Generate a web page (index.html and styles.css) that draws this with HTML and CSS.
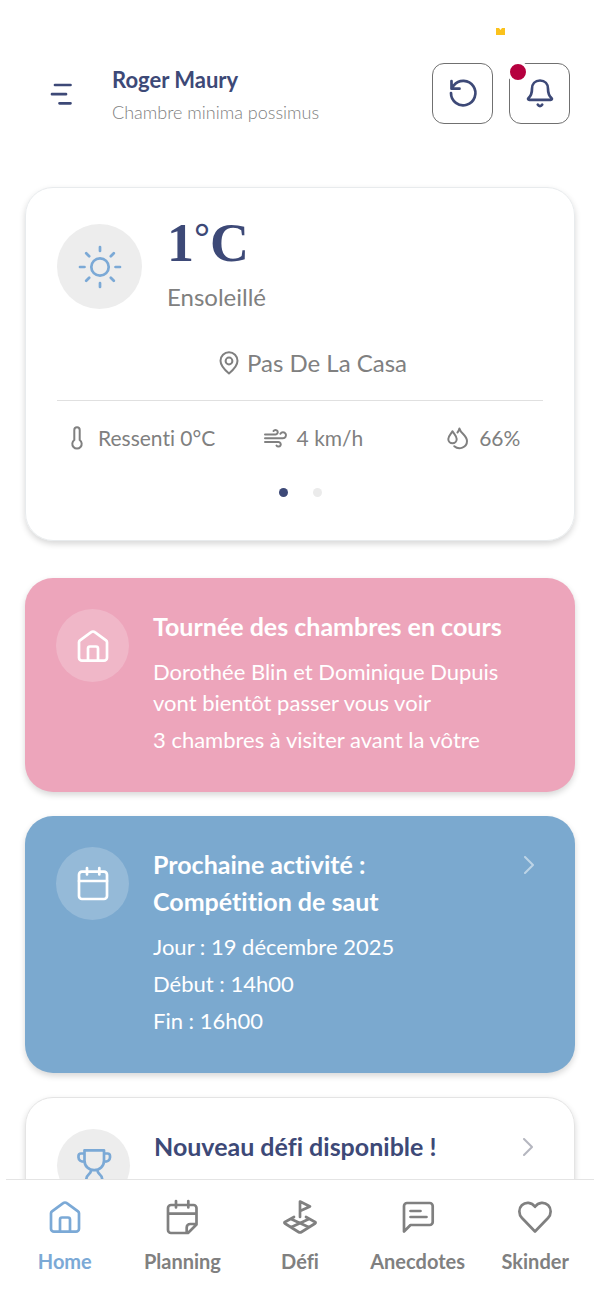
FILE: index.html
```html
<!DOCTYPE html>
<html lang="fr">
<head>
<meta charset="utf-8">
<meta name="viewport" content="width=device-width, initial-scale=1.0">
<title>Home</title>
<link rel="stylesheet" href="styles.css">
</head>
<body>

<!-- shared shapes -->
<svg class="defs" aria-hidden="true">
	<symbol id="house" viewBox="0 0 36 36"><path d="M18 3.500c.7 0 1.300.2 1.800.6L31 12.300c.7.5 1 1.200 1 2V29.700a3 3 0 0 1-3 3H7a3 3 0 0 1-3-3V14.300c0-.8.300-1.500 1-2L16.200 4.100c.5-.4 1.100-.6 1.800-.6zM13 32.700V20.500a2 2 0 0 1 2-2h6a2 2 0 0 1 2 2v12.200"/></symbol>
	<symbol id="chevron" viewBox="0 0 24 24"><path d="M8 4l8 8-8 8"/></symbol>
</svg>

<main>
	<header>
		<svg class="crown" viewBox="0 0 9 7"><path d="M0 0h3l1.500 2L6 0h3v7H0z"/></svg>
		<button class="menu" aria-label="Menu"><svg class="icon" viewBox="0 0 36 36"><path d="M15 9H30.500M12 18.200H26M19.500 27.300H30.500"/></svg></button>
		<div class="who">
			<h1>Roger Maury</h1>
			<p>Chambre minima possimus</p>
		</div>
		<button class="square" aria-label="Actualiser"><svg class="icon" viewBox="0 0 36 36"><path d="M6.500 6v7.700h8M6 18a12.200 12.200 0 1 0 2.800-7.700l-2 3"/></svg></button>
		<button class="square" aria-label="Notifications"><svg class="icon" viewBox="0 0 36 36"><path d="M18 5.500c-5 0-8 3.600-8 8.200 0 4.800-1 7-3.400 9.200-1 .9-.5 2 .8 2h21.200c1.300 0 1.800-1.100.8-2-2.400-2.200-3.400-4.400-3.400-9.200 0-4.600-3-8.200-8-8.200zM15.800 29.700c1 1.800 3.400 1.800 4.400 0"/></svg><span class="dot"></span></button>
	</header>

	<section class="card weather">
		<div class="now">
			<div class="round"><svg class="icon" viewBox="0 0 44 44"><circle cx="22" cy="22" r="8.700"/><path d="M22 2v4M22 38v4M2 22h4.500M37.500 22H42M8.200 8.200l3 3M32.800 32.800l3 3M8.200 35.800l3-3M32.800 11.200l3-3"/></svg></div>
			<div>
				<p class="temp">1<span class="degree">°</span>C</p>
				<p class="sky">Ensoleillé</p>
			</div>
		</div>
		<p class="place"><svg class="icon" viewBox="0 0 24 24"><path d="M12 22.500S3.500 15.500 3.500 9.800a8.500 8.500 0 0 1 17 0C20.500 15.500 12 22.500 12 22.500z"/><circle cx="12" cy="10" r="3.400"/></svg>Pas De La Casa</p>
		<ul class="stats">
			<li><svg class="icon" viewBox="0 0 24 24"><path d="M9.300 14V4a2.700 2.700 0 0 1 5.400 0v10a4.700 4.700 0 1 1-5.400 0z"/></svg>Ressenti 0°C</li>
			<li><svg class="icon" viewBox="0 0 24 24"><path d="M1 8.500h10.500a2.300 2.300 0 1 0-2-3.500M1 12.300h18a3 3 0 1 0-2.600-4.500M1 16h13.500a2.300 2.300 0 1 1-2 3.500"/></svg>4 km/h</li>
			<li><svg class="icon" viewBox="0 0 24 24"><path d="M6.500 5.200C5 8 2.300 10 2.300 13a4.200 4.200 0 0 0 8.400 0c0-3-2.700-5-4.200-7.800zM11.500 6.500c.9-1 1.500-2.200 1.900-4 1.200 5 7.600 7 7.600 12.500 0 6.500-8 9.500-12.700 5.200"/></svg>66%</li>
		</ul>
		<div class="dots"><span class="on"></span><span></span></div>
	</section>

	<section class="card pink">
		<div class="round"><svg class="icon"><use href="#house"/></svg></div>
		<div class="text">
			<h2>Tournée des chambres en cours</h2>
			<p>Dorothée Blin et Dominique Dupuis vont bientôt passer vous voir</p>
			<p>3 chambres à visiter avant la vôtre</p>
		</div>
	</section>

	<a class="card blue" href="#activite">
		<div class="round"><svg class="icon" viewBox="0 0 36 36"><rect x="4" y="5.700" width="28" height="27.300" rx="3"/><path d="M4 15h28M12 2v6.500M24.300 2v6.500"/></svg></div>
		<div class="text">
			<h2>Prochaine activité :</h2>
			<h2>Compétition de saut</h2>
			<p>Jour : 19 décembre 2025</p>
			<p>Début : 14h00</p>
			<p>Fin : 16h00</p>
		</div>
		<svg class="icon arrow"><use href="#chevron"/></svg>
	</a>

	<a class="card white" href="#defi">
		<div class="round"><svg class="icon" viewBox="0 0 36 36"><path d="M8.500 2.300H28v10.400c0 5.500-4.300 9.500-9.700 9.500s-9.800-4-9.800-9.500zM8.500 5.500H5c-1.500 0-2.500 1-2.500 2.500v1.500c0 2.500 2.500 4.200 6 4.200M28 5.500h3.500c1.500 0 2.500 1 2.500 2.500v1.500c0 2.500-2.500 4.200-6 4.200M15 22.500c0 4-4.500 3.500-4.700 8.500M21.500 22.500c0 4 4.500 3.500 4.700 8.500"/></svg></div>
		<div class="text">
			<h2>Nouveau défi disponible !</h2>
		</div>
		<svg class="icon arrow"><use href="#chevron"/></svg>
	</a>
</main>

<nav>
	<a class="on" href="#home"><svg class="icon"><use href="#house"/></svg>Home</a>
	<a href="#planning"><svg class="icon" viewBox="0 0 36 36"><path d="M24 34H7a3 3 0 0 1-3-3V9a3 3 0 0 1 3-3h22.500a3 3 0 0 1 3 3v16.500zM4 14.700h28.500M12 2v6.500M24.300 2v6.500M22.700 34v-5.500a3.500 3.500 0 0 1 3.500-3.500h6.300"/></svg>Planning</a>
	<a href="#defi"><svg class="icon" viewBox="0 0 36 36"><path d="M18 18V2.500L28 7.500 18 12M12 18L3 23c-.8.500-.8 1 0 1.500L16.500 33c1 .6 2 .6 3 0L33 24.500c.8-.5.8-1 0-1.500l-9-5M9 20l18 8.300M27 20L9 28.300"/></svg>Défi</a>
	<a href="#anecdotes"><svg class="icon" viewBox="0 0 36 36"><path d="M4 32.500V7a3 3 0 0 1 3-3h22.700a3 3 0 0 1 3 3v16a3 3 0 0 1-3 3H10.500zM10.500 12h10M10.500 18h16"/></svg>Anecdotes</a>
	<a href="#skinder"><svg class="icon" viewBox="0 0 36 36"><path d="M18 32.500L5 19C1.500 15.200 1.500 9.500 4.800 6.300 8.500 2.800 14.500 3 18 7.800c3.500-4.800 9.500-5 13.200-1.500C34.500 9.500 34.500 15.200 31 19z"/></svg>Skinder</a>
</nav>

</body>
</html>
```
FILE: styles.css
```css
* {
	box-sizing: border-box;
}
body {
	display: flex;
	flex-direction: column;
	height: 100vh;
	margin: 0;
	background: #fff;
	color: #808080;
	font-family: Lato, "Liberation Sans", sans-serif;
	font-size: 22px;
	line-height: 31px;
	font-variant-ligatures: none;
}
h1, h2, p, ul {
	margin: 0;
	padding: 0;
}
a {
	color: inherit;
	text-decoration: none;
}
button {
	padding: 0;
	border: 0;
	background: none;
	color: #3d4977;
}
main {
	flex: 1;
	min-height: 0;
	overflow-y: auto;
	scrollbar-width: none;
}
.defs {
	position: absolute;
	width: 0;
	height: 0;
}
.icon {
	display: block;
	flex: none;
	width: 36px;
	height: 36px;
	fill: none;
	stroke: currentColor;
	stroke-width: 2.7;
	stroke-linecap: round;
	stroke-linejoin: round;
}
/* header */
header {
	position: relative;
	display: flex;
	align-items: center;
	padding: 59px 30px 60px;
}
.crown {
	position: absolute;
	top: 28px;
	right: 95px;
	width: 9px;
	height: 7px;
	fill: #fbc21c;
}
.menu {
	margin: 0 33px 0 10px;
	padding-top: 2px;
}
.who {
	flex: 1;
	padding: 4px 0 0 3px;
}
.who h1 {
	color: #3d4977;
	font-size: 22px;
	line-height: 34px;
}
.who p {
	font-size: 18px;
	font-weight: 300;
	line-height: 30px;
}
.square {
	position: relative;
	display: grid;
	place-items: center;
	width: 61px;
	height: 61px;
	margin-left: 16px;
	border: 1px solid #707070;
	border-radius: 12px;
}
.dot {
	position: absolute;
	top: -3px;
	left: -3px;
	width: 22px;
	height: 22px;
	border: 3px solid #fff;
	border-radius: 50%;
	background: #b6003f;
}
/* cards */
.card {
	display: flex;
	gap: 24px;
	margin: 0 25px 24px;
	padding: 31px 31px 37px;
	border-radius: 28px;
	box-shadow: 0 3px 6px rgba(0, 0, 0, .16);
}
.round {
	display: grid;
	flex: none;
	place-items: center;
	width: 73px;
	height: 73px;
	border-radius: 50%;
	background: #ededed;
}
.text {
	flex: 1;
	padding-top: 2px;
}
.text h2 {
	font-size: 25px;
	line-height: 30px;
}
.text h2 + h2 {
	margin-top: 7px;
}
.text p + p {
	margin-top: 6px;
}
.text h2 + p {
	margin-top: 15px;
}
.arrow {
	width: 24px;
	height: 24px;
	margin: 6px 3px 0 0;
	stroke-width: 2;
	opacity: .5;
}
.pink, .blue {
	color: #fff;
}
.pink {
	background: #eda5bb;
}
.blue {
	background: #7ba9cf;
}
.pink .round, .blue .round {
	background: rgba(255, 255, 255, .2);
}
.white {
	border: 1px solid #e4e4e4;
	color: #3d4977;
}
.white .round {
	color: #7ba9d6;
}
.white .arrow {
	color: #6c6f80;
}
/* weather */
.weather {
	flex-direction: column;
	gap: 0;
	margin-bottom: 37px;
	padding-bottom: 43px;
	border: 1px solid #e8ebed;
}
.now {
	display: flex;
	gap: 25px;
}
.now .round {
	width: 85px;
	height: 85px;
	margin-top: 5px;
	color: #7ba9d6;
}
.now .icon {
	width: 44px;
	height: 44px;
}
.temp {
	color: #3d4977;
	font-family: "Liberation Serif", serif;
	font-size: 54px;
	font-weight: bold;
	line-height: 48px;
}
.degree {
	font-size: 40px;
	line-height: 0;
	vertical-align: 10px;
}
.sky {
	margin-top: 15px;
	font-size: 24px;
	line-height: 30px;
}
.place {
	display: flex;
	justify-content: center;
	align-items: center;
	gap: 6px;
	padding: 36px 0 22px 24px;
	border-bottom: 1px solid #e0e0e0;
	font-size: 24px;
	line-height: 30px;
}
.place .icon, .stats .icon {
	width: 24px;
	height: 24px;
	stroke-width: 2;
}
.stats {
	display: grid;
	grid-template-columns: 199fr 183fr 97fr;
	padding: 22px 0 0 8px;
	font-size: 21px;
	line-height: 30px;
	list-style: none;
}
.stats li {
	display: flex;
	align-items: center;
	gap: 9px;
}
.dots {
	display: flex;
	justify-content: center;
	gap: 25px;
	margin-top: 35px;
}
.dots span {
	width: 9px;
	height: 9px;
	border-radius: 50%;
	background: #ebebeb;
}
.dots .on {
	background: #3d4977;
}
/* bottom tabs */
nav {
	display: grid;
	grid-template-columns: repeat(5, 1fr);
	margin: 0 6px;
	padding: 19px 0 22px;
	border-top: 1px solid #e4e4e4;
	font-size: 20px;
	font-weight: bold;
}
nav a {
	display: flex;
	flex-direction: column;
	align-items: center;
	gap: 11px;
}
nav .on {
	color: #7ba9d6;
}
```
